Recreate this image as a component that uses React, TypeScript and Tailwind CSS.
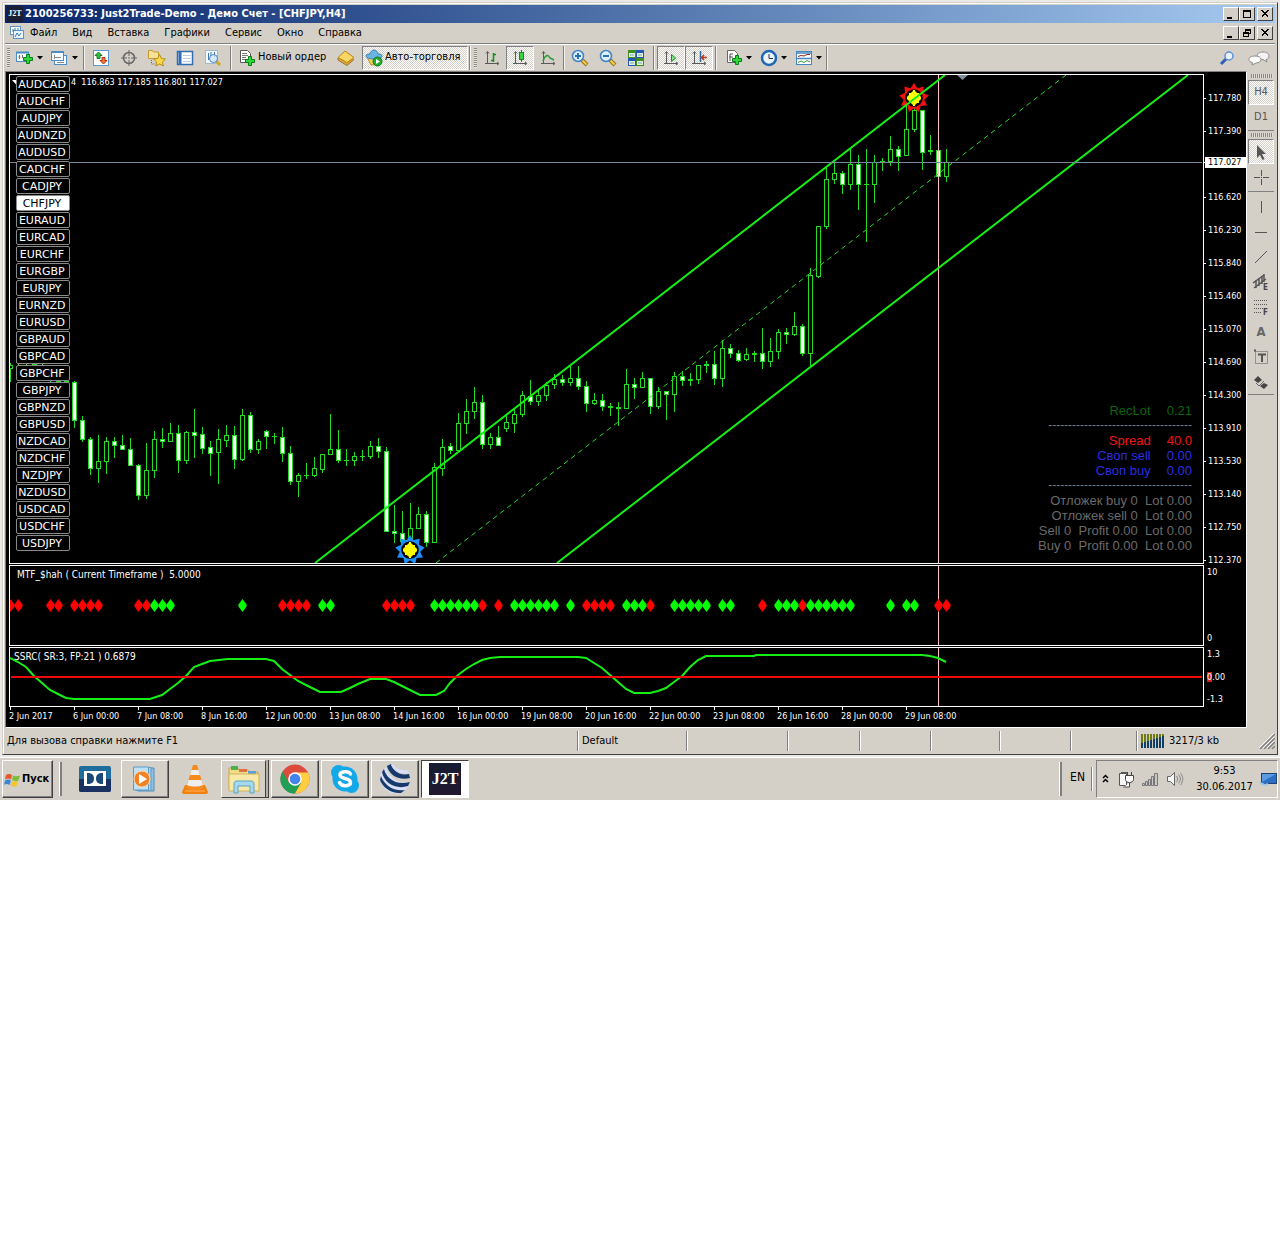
import React from "react";

type Candle = [high: number, top: number, bottom: number, low: number, kind: "u" | "d" | "x"];

const STEP = 8;
const FIRST_X = 10;

// u = hollow body, d = filled body, x = doji
const candles: Candle[] = [
  [363, 365, 369, 382, "u"], [364, 366, 372, 376, "d"], [364, 368, 372, 378, "d"], [362, 364, 372, 376, "d"],
  [364, 368, 374, 378, "u"], [376, 382, 390, 392, "d"], [376, 381, 388, 392, "d"], [378, 381, 386, 390, "d"],
  [381, 382, 421, 428, "d"], [416, 420, 440, 442, "d"], [437, 439, 469, 475, "d"], [435, 461, 469, 483, "u"],
  [437, 441, 462, 474, "u"], [437, 441, 446, 458, "d"], [435, 445, 450, 450, "d"], [438, 449, 466, 466, "d"],
  [464, 465, 496, 500, "d"], [443, 470, 496, 499, "u"], [431, 439, 471, 478, "u"], [428, 439, 442, 448, "d"],
  [423, 433, 442, 442, "u"], [425, 433, 461, 473, "d"], [431, 432, 461, 464, "u"], [409, 432, 436, 458, "d"],
  [427, 434, 449, 454, "d"], [441, 447, 454, 476, "d"], [429, 439, 453, 484, "u"], [425, 435, 441, 447, "u"],
  [426, 435, 460, 469, "d"], [409, 415, 460, 461, "u"], [412, 415, 450, 453, "d"], [439, 441, 450, 454, "u"],
  [430, 431, 437, 449, "d"], [433, 436, 437, 444, "x"], [427, 437, 454, 462, "d"], [446, 453, 482, 485, "d"],
  [473, 475, 482, 497, "u"], [463, 475, 476, 479, "x"], [457, 468, 476, 477, "u"], [454, 454, 470, 473, "u"],
  [414, 449, 455, 455, "u"], [430, 449, 461, 463, "d"], [449, 460, 461, 466, "x"], [452, 456, 461, 466, "u"],
  [450, 456, 457, 461, "x"], [441, 446, 457, 459, "u"], [438, 446, 452, 458, "d"], [447, 451, 532, 532, "d"],
  [505, 531, 534, 543, "d"], [511, 533, 542, 550, "d"], [503, 528, 545, 548, "u"], [507, 514, 529, 529, "u"],
  [511, 514, 543, 547, "d"], [463, 467, 543, 543, "u"], [439, 447, 469, 476, "u"], [443, 446, 451, 454, "d"],
  [413, 423, 451, 451, "u"], [399, 411, 424, 434, "u"], [387, 402, 412, 419, "u"], [395, 402, 445, 449, "d"],
  [433, 437, 445, 449, "u"], [426, 437, 446, 446, "d"], [415, 422, 429, 432, "u"], [408, 414, 424, 433, "u"],
  [391, 395, 415, 417, "u"], [380, 396, 402, 405, "d"], [391, 395, 402, 406, "u"], [382, 385, 396, 401, "u"],
  [374, 379, 385, 389, "u"], [375, 379, 383, 386, "d"], [365, 378, 383, 386, "u"], [366, 378, 387, 390, "d"],
  [381, 386, 404, 412, "d"], [393, 400, 404, 405, "u"], [394, 400, 407, 411, "d"], [403, 406, 408, 416, "x"],
  [402, 407, 409, 426, "x"], [369, 384, 409, 409, "u"], [378, 384, 388, 399, "d"], [372, 378, 388, 388, "u"],
  [378, 378, 407, 414, "d"], [387, 391, 407, 409, "u"], [391, 391, 395, 420, "d"], [372, 376, 395, 412, "u"],
  [371, 376, 381, 386, "d"], [373, 379, 381, 386, "x"], [365, 365, 380, 384, "u"], [361, 364, 366, 373, "x"],
  [351, 364, 379, 385, "d"], [340, 348, 379, 387, "u"], [344, 348, 354, 358, "d"], [350, 353, 361, 362, "d"],
  [348, 354, 360, 361, "u"], [351, 353, 355, 362, "x"], [328, 353, 362, 369, "d"], [338, 351, 362, 367, "u"],
  [329, 332, 352, 359, "u"], [328, 332, 335, 344, "d"], [312, 326, 335, 336, "u"], [324, 326, 354, 356, "d"],
  [268, 275, 354, 367, "u"], [226, 226, 277, 278, "u"], [167, 179, 227, 229, "u"], [162, 173, 180, 184, "u"],
  [171, 173, 185, 194, "d"], [149, 164, 185, 190, "u"], [155, 164, 185, 210, "d"], [149, 184, 185, 242, "x"],
  [155, 162, 185, 203, "u"], [158, 161, 163, 171, "x"], [136, 149, 162, 166, "u"], [146, 149, 157, 171, "d"],
  [106, 129, 156, 156, "u"], [106, 110, 130, 132, "u"], [110, 110, 153, 170, "d"], [135, 150, 152, 155, "x"],
  [142, 150, 177, 182, "d"], [149, 162, 177, 182, "u"],
];

const redMarks = [
  10, 18, 50, 58, 74, 82, 90, 98, 138, 146, 282, 290, 298, 306, 386, 394, 402, 410, 482, 498, 586, 594, 602, 610, 650,
  762, 802, 938, 946,
];
const greenMarks = [
  154, 162, 170, 242, 322, 330, 434, 442, 450, 458, 466, 474, 514, 522, 530, 538, 546, 554, 570, 626, 634, 642, 674,
  682, 690, 698, 706, 722, 730, 778, 786, 794, 810, 818, 826, 834, 842, 850, 890, 906, 914,
];

const pairs = [
  "AUDCAD", "AUDCHF", "AUDJPY", "AUDNZD", "AUDUSD", "CADCHF", "CADJPY", "CHFJPY", "EURAUD", "EURCAD", "EURCHF",
  "EURGBP", "EURJPY", "EURNZD", "EURUSD", "GBPAUD", "GBPCAD", "GBPCHF", "GBPJPY", "GBPNZD", "GBPUSD", "NZDCAD",
  "NZDCHF", "NZDJPY", "NZDUSD", "USDCAD", "USDCHF", "USDJPY",
];

const prices = [
  "117.780", "117.390", "117.027", "116.620", "116.230", "115.840", "115.460", "115.070", "114.690", "114.300",
  "113.910", "113.530", "113.140", "112.750", "112.370",
];

const times = [
  "2 Jun 2017", "6 Jun 00:00", "7 Jun 08:00", "8 Jun 16:00", "12 Jun 00:00", "13 Jun 08:00", "14 Jun 16:00",
  "16 Jun 00:00", "19 Jun 08:00", "20 Jun 16:00", "22 Jun 00:00", "23 Jun 08:00", "26 Jun 16:00", "28 Jun 00:00",
  "29 Jun 08:00",
];

const menu = ["Файл", "Вид", "Вставка", "Графики", "Сервис", "Окно", "Справка"];

const ui = "font-['DejaVu_Sans_Condensed','DejaVu_Sans',sans-serif]";
const raised = "border border-t-white border-l-white border-r-[#404040] border-b-[#404040] bg-[#d4d0c8]";
const pressed =
  "border border-t-[#808080] border-l-[#808080] border-r-white border-b-white bg-[repeating-conic-gradient(#fff_0_25%,#d4d0c8_0_50%)] bg-[length:2px_2px]";

/* ---------- small building blocks ---------- */

const Svg = ({ w = 18, h = 18, children }: { w?: number; h?: number; children: React.ReactNode }) => (
  <svg width={w} height={h} viewBox={`0 0 ${w} ${h}`} fill="none" className="shrink-0" aria-hidden="true">
    {children}
  </svg>
);

const Tool = ({ label, on, children }: { label: string; on?: boolean; children: React.ReactNode }) => (
  <button aria-label={label} className={`flex h-6 w-7 shrink-0 items-center justify-center ${on ? pressed : ""}`}>
    {children}
  </button>
);

const DropTool = ({ label, children }: { label: string; children: React.ReactNode }) => (
  <button aria-label={label} className="flex h-6 w-[35px] shrink-0 items-center gap-0.5 pl-0.5">
    {children}
    <Svg w={7} h={4}>
      <path d="M1 0h6L4 3.5z" fill="#000" />
    </Svg>
  </button>
);

const Sep = ({ className = "" }: { className?: string }) => (
  <div className={`h-6 w-0.5 shrink-0 border-l border-[#808080] bg-[#f4f2ee] ${className}`}></div>
);

const Grip = ({ className = "" }: { className?: string }) => (
  <div className={`h-5 w-[3px] shrink-0 bg-[repeating-linear-gradient(#8a8780_0_1px,#e8e6e0_1px_2px)] ${className}`}></div>
);

const SideGrip = () => (
  <div className="my-0.5 ml-[3px] h-1 w-[22px] bg-[repeating-linear-gradient(90deg,#8a8780_0_1px,#e0ddd6_1px_2px)]"></div>
);

const SideTool = ({ label, on, children }: { label: string; on?: boolean; children: React.ReactNode }) => (
  <button
    aria-label={label}
    className={`flex h-[25px] w-full shrink-0 items-center justify-center text-[11px] text-[#555] ${on ? pressed : ""}`}
  >
    {children}
  </button>
);

const Axes = ({ children }: { children: React.ReactNode }) => (
  <Svg>
    <path d="M4.500 3v12M2 14.500h13M3 4.500l1.500-2 1.500 2M14 13l2 1.500-2 1.500" stroke="#5a5a5a" />
    {children}
  </Svg>
);

const Plus = ({ x, y }: { x: number; y: number }) => (
  <path
    transform={`translate(${x} ${y})`}
    d="M3.500.5h3v3h3v3h-3v3h-3v-3h-3v-3h3z"
    fill="#2fd83a"
    stroke="#0b7d16"
  />
);

const Lens = ({ sign }: { sign: string }) => (
  <Svg>
    <path d="M11 11l5 5" stroke="#9a7410" strokeWidth="4" />
    <path d="M11.500 11.500l4 4" stroke="#f3cf4a" strokeWidth="2" />
    <circle cx="7" cy="7" r="5.500" fill="#dff0fd" stroke="#3d83c4" strokeWidth="1.500" />
    <path d={sign} stroke="#2a6fb5" strokeWidth="2" />
  </Svg>
);

const Sun = ({ x, y, color }: { x: number; y: number; color: string }) => (
  <g transform={`translate(${x} ${y})`}>
    {[0, 40, 80, 120, 160, 200, 240, 280, 320].map((a) => (
      <path key={a} d="M-4-9L0-15l4 6z" fill={color} transform={`rotate(${a})`} />
    ))}
    <circle r="9.500" fill="#000" stroke={color} strokeWidth="1.500" />
    {[0, 30, 60].map((a) => (
      <rect key={a} x="-5" y="-5" width="10" height="10" fill="#ff0" transform={`rotate(${a})`} />
    ))}
    <path d="M0-8v16M-7 0H7" stroke="#ff0" strokeWidth="2" />
  </g>
);

const WinButton = ({ label, d, className = "" }: { label: string; d: string; className?: string }) => (
  <button aria-label={label} className={`flex h-3.5 w-4 items-center justify-center ${raised} ${className}`}>
    <svg width="10" height="10" viewBox="0 0 10 10" fill="none" stroke="#000" shapeRendering="crispEdges" aria-hidden="true">
      <path d={d} />
    </svg>
  </button>
);

const MIN = "M1 8h5M1 9h5";
const MAX = "M1 1.500h8M1 2.500h8M1.500 1v8M8.500 1v8M1 8.500h8";
const RESTORE = "M3 1.500h6M3 2.500h6M3.500 1v3M8.500 1v5M7 5.500h2M1 4.500h6M1 5.500h6M1.500 4v5M6.500 4v5M1 8.500h6";
const CLOSE = "M1.500 1.500l7 7M2.500 1.500l6 6M8.500 1.500l-7 7M7.500 1.500l-6 6";

/* ---------- window bars ---------- */

const TitleBar = () => (
  <div className="flex h-[18px] items-center bg-linear-to-r from-[#0a246a] to-[#a6caf0] pr-0.5 pl-0.5">
    <div className="flex h-4 w-4 items-center justify-center bg-[#1b1f33] font-['Liberation_Serif',serif] text-[8px] font-bold text-white">
      J2T
    </div>
    <h1 className="ml-0.5 flex-1 text-[11px] leading-4 font-bold whitespace-nowrap text-white">
      2100256733: Just2Trade-Demo - Демо Счет - [CHFJPY,H4]
    </h1>
    <WinButton label="Свернуть" d={MIN} />
    <WinButton label="Развернуть" d={MAX} />
    <WinButton label="Закрыть" d={CLOSE} className="ml-0.5" />
  </div>
);

const MenuBar = () => (
  <div className="flex h-5 items-center pr-0.5 pl-1 text-[11px] text-black">
    <Svg w={16} h={16}>
      <rect x="1.500" y="1.500" width="10" height="8" fill="#fff" stroke="#5d95c6" />
      <rect x="4.500" y="5.500" width="10" height="8" fill="#eaf4fc" stroke="#5d95c6" />
      <path d="M4 7V4m2 2V3m3 2V3M6 12l2-4 2 3 2-3" stroke="#3c7ab2" />
    </Svg>
    <nav className="flex flex-1 gap-[15px] pl-[5px]">
      {menu.map((m) => (
        <button key={m}>{m}</button>
      ))}
    </nav>
    <WinButton label="Свернуть окно" d={MIN} />
    <WinButton label="Восстановить окно" d={RESTORE} />
    <WinButton label="Закрыть окно" d={CLOSE} className="ml-0.5" />
  </div>
);

const Toolbar = () => (
  <div className="flex h-7 items-center border-t border-[#808080] text-[11px] text-black shadow-[inset_0_1px_0_#fff]">
    <Grip className="mr-0.5 ml-0.5" />
    <DropTool label="Новый график">
      <Svg w={20}>
        <rect x="2.500" y="3.500" width="12" height="9" fill="#f6fbff" stroke="#4d8cc4" />
        <path d="M2 3.500h13" stroke="#4d8cc4" strokeWidth="2" />
        <path d="M5.500 6v4m-1-2h2M8.500 6v3" stroke="#777" />
        <Plus x={9} y={5} />
      </Svg>
    </DropTool>
    <DropTool label="Профили">
      <Svg w={20}>
        <rect x="5.500" y="6.500" width="12" height="9" fill="#f6fbff" stroke="#4d8cc4" />
        <rect x="2.500" y="2.500" width="12" height="9" fill="#f6fbff" stroke="#4d8cc4" />
        <path d="M2 3h13" stroke="#4d8cc4" strokeWidth="2" />
        <path d="M5.500 6v4M5 8.500h7M8 13.500h7" stroke="#888" />
      </Svg>
    </DropTool>
    <Sep className="mr-0.5 ml-px" />
    <Tool label="Обзор рынка">
      <Svg>
        <rect x="1.500" y="1.500" width="15" height="15" fill="#fff" stroke="#5b9bd5" />
        <path d="M6.500 3l3.500 3.500H8v3H5v-3H3z" fill="#2fc23a" stroke="#187a20" />
        <path d="M11.500 15L8 11.500h2v-3h3v3h2z" fill="#f2703a" stroke="#b23a10" />
      </Svg>
    </Tool>
    <Tool label="Окно данных">
      <Svg>
        <circle cx="9" cy="9" r="5.500" stroke="#666" strokeWidth="1.500" />
        <path d="M9 1v6M9 11v6M1 9h6M11 9h6" stroke="#666" />
        <path d="M8 9h2" stroke="#666" />
      </Svg>
    </Tool>
    <Tool label="Навигатор">
      <Svg w={20}>
        <path d="M1.500 9.500v-8h4l1 1.500h5v6.500z" fill="#f8e29a" stroke="#c79a2b" />
        <path d="M4.500 11v4H8" stroke="#666" strokeDasharray="1 1" />
        <path d="M12.500 5.500l1.900 4 4.100.5-3 2.900.8 4.100-3.800-2-3.700 2 .7-4.100-3-2.900 4.200-.5z" fill="#fbd94b" stroke="#b98a12" />
      </Svg>
    </Tool>
    <Tool label="Терминал">
      <Svg>
        <rect x="1.500" y="2.500" width="15" height="13" fill="#fff" stroke="#2f6db0" strokeWidth="1.500" />
        <path d="M4 3v12" stroke="#2f6db0" strokeWidth="3" />
        <path d="M7 6.500h8M7 9.500h8M7 12.500h8" stroke="#b6cfe6" />
      </Svg>
    </Tool>
    <Tool label="Тестер стратегий">
      <Svg>
        <rect x="1.500" y="1.500" width="12" height="13" fill="#f4f9fe" stroke="#9dbbd6" />
        <path d="M4.500 4v7M7 3v4M10.500 3v5" stroke="#3d7ab0" />
        <path d="M12 12l4 4" stroke="#d6a62c" strokeWidth="3" />
        <circle cx="9.500" cy="9.500" r="4" fill="#cfe6fa" fillOpacity=".8" stroke="#4a86bd" />
      </Svg>
    </Tool>
    <Sep className="mr-1.5 ml-[3px]" />
    <button className="flex h-6 w-[94px] shrink-0 items-center gap-0.5 whitespace-nowrap">
      <Svg>
        <path d="M2.500 1.500h7l3 3v9h-10z" fill="#fff" stroke="#555" />
        <path d="M4 4.500h5M4 6.500h6M4 8.500h4M4 10.500h4" stroke="#777" />
        <Plus x={7} y={7} />
      </Svg>
      <span>Новый ордер</span>
    </button>
    <Tool label="Редактор">
      <Svg>
        <path d="M1 10l7-7 9 7-7 6z" fill="#d9a32a" />
        <path d="M1 8.500L8 2l9 6.500-7 5z" fill="#f9d765" stroke="#b9831a" />
        <path d="M1 9v2l9 5.500 7-6" stroke="#a06c10" />
      </Svg>
    </Tool>
    <button className={`ml-0.5 flex h-6 w-[106px] shrink-0 items-center gap-0.5 px-0.5 whitespace-nowrap ${pressed}`}>
      <Svg>
        <path d="M2 8l4 8 9-1 1-7z" fill="#f4d25e" stroke="#b98f20" />
        <path d="M1 7c0-2 3-2 4-2 0-2 2-4 4-4s4 2 4 4c2 0 4 0 4 2s-4 3-8 3-8-1-8-3z" fill="#69b4e0" stroke="#3a83b5" />
        <circle cx="12.500" cy="12.500" r="4.500" fill="#22ad2d" stroke="#0e7c1a" />
        <path d="M11 10l4 2.500-4 2.500z" fill="#fff" />
      </Svg>
      <span>Авто-торговля</span>
    </button>
    <Sep className="ml-px" />
    <Grip className="mr-px ml-[3px]" />
    <Tool label="Бары">
      <Axes>
        <path d="M10.500 4v9M11 5.500h2M8 11.500h2" stroke="#178a22" strokeWidth="1.500" />
      </Axes>
    </Tool>
    <Tool label="Свечи" on>
      <Axes>
        <path d="M10.500 1v12" stroke="#178a22" />
        <rect x="8.500" y="3.500" width="4" height="7" fill="#35d642" stroke="#178a22" />
      </Axes>
    </Tool>
    <Tool label="Линия">
      <Axes>
        <path d="M4 12c2-6 5-7 7-3l4 2" stroke="#2c9a36" strokeWidth="1.500" />
      </Axes>
    </Tool>
    <Sep className="mr-px ml-px" />
    <Tool label="Увеличить">
      <Lens sign="M4 7h6M7 4v6" />
    </Tool>
    <Tool label="Уменьшить">
      <Lens sign="M4 7h6" />
    </Tool>
    <Tool label="Расположить окна">
      <Svg>
        <rect x="1" y="1" width="8" height="8" fill="#3f8f22" />
        <rect x="9" y="1" width="8" height="8" fill="#2357b4" />
        <rect x="1" y="9" width="8" height="8" fill="#2357b4" />
        <rect x="9" y="9" width="8" height="8" fill="#3f8f22" />
        <path d="M2 4h6v4H2zM10 4h6v4h-6zM2 12h6v4H2zM10 12h6v4h-6z" fill="#e4f2dc" />
        <path d="M3 6h4M11 6h4M3 14h4M11 14h4" stroke="#6fa3c8" />
      </Svg>
    </Tool>
    <Sep className="mr-0.5 ml-[3px]" />
    <Tool label="Автопрокрутка" on>
      <Axes>
        <path d="M9.500 5.500l4 3.500-4 3.500z" fill="#7ee887" stroke="#178a22" />
      </Axes>
    </Tool>
    <Tool label="Сдвиг графика" on>
      <Axes>
        <path d="M10.500 2v11" stroke="#2a63a8" strokeWidth="1.500" />
        <path d="M17 8.500h-5M14 6l-2.500 2.500L14 11" stroke="#c0391b" strokeWidth="1.500" />
      </Axes>
    </Tool>
    <Sep className="mr-1.5 ml-0.5" />
    <DropTool label="Индикаторы">
      <Svg>
        <path d="M2.500 1.500h7l3 3v9h-10z" fill="#fff" stroke="#666" />
        <path d="M5 12V5h3M4 8h4" stroke="#555" />
        <Plus x={7} y={6} />
      </Svg>
    </DropTool>
    <DropTool label="Периоды">
      <Svg>
        <circle cx="9" cy="9" r="7" fill="#e9f3fc" stroke="#1d66b8" strokeWidth="2.500" />
        <path d="M9 5v4.500h4" stroke="#333" />
      </Svg>
    </DropTool>
    <DropTool label="Шаблоны">
      <Svg>
        <rect x="1.500" y="2.500" width="15" height="13" fill="#fff" stroke="#4585c2" />
        <path d="M1 4h16M1 9.500h16" stroke="#4585c2" strokeWidth="1.500" />
        <path d="M3 7.500l3-1 3 .5 3-1.500h3" stroke="#8c2a1c" />
        <path d="M3 13.500l3-1.500 3 1.500 3-2 3 1.500" stroke="#2f9a38" />
      </Svg>
    </DropTool>
    <Sep className="mr-auto -ml-0.5" />
    <button aria-label="Поиск" className="mr-3">
      <Svg>
        <path d="M8 10l-5 5" stroke="#2d5fb8" strokeWidth="3" />
        <circle cx="11" cy="7" r="4" fill="#eaf3fc" stroke="#5f8fd4" strokeWidth="1.500" />
      </Svg>
    </button>
    <button aria-label="Чат" className="mr-[5px]">
      <Svg w={22}>
        <path d="M15 3c4 0 6 2 6 4s-1 3-3 3.500L19 13l-4-2.500C11 10.500 9 9 9 7s2-4 6-4z" fill="#f4f4f4" stroke="#8b8b8b" />
        <path d="M7 7c4 0 6 1.500 6 3.500S11 14 8 14l-4 2 .5-2.500C2 13 1 12 1 10.500 1 8.500 3 7 7 7z" fill="#fff" stroke="#8b8b8b" />
      </Svg>
    </button>
  </div>
);

/* ---------- chart ---------- */

const PriceChart = () => (
  <svg viewBox="10 75 1192 488" className="block h-[488px] w-[1192px] max-w-none" aria-label="CHFJPY H4">
    <g shapeRendering="crispEdges">
      {candles.map(([high, top, bottom, low, kind], i) => {
        const x = FIRST_X + i * STEP;
        return (
          <g key={i} fill="#24dc24">
            <rect x={x} y={high} width={1} height={low - high} />
            <rect x={x - 2} y={top} width={5} height={bottom - top} />
            {kind !== "x" && (
              <rect
                x={x - 1}
                y={top + 1}
                width={3}
                height={Math.max(bottom - top - 2, 1)}
                fill={kind === "d" ? "#fff" : "#000"}
              />
            )}
          </g>
        );
      })}
      <path d="M938.500 75V563" stroke="#ffc0cb" />
    </g>
    <Sun x={914} y={98} color="#f01010" />
    <Sun x={410} y={550} color="#1e90ff" />
    <path d="M315 563L945 75M557 563L1188 75" stroke="#14f014" strokeWidth="2" />
    <path d="M436 563L1066 75" stroke="#28d828" strokeDasharray="5 4" />
    <path d="M10 162.500H1202" stroke="#778899" shapeRendering="crispEdges" />
    <path d="M957 75h11l-5.500 5z" fill="#8090a0" />
    <path d="M12 80h9l-4.500 5z" fill="#fff" />
  </svg>
);

const PairList = () => (
  <div className="absolute top-px left-1.5 flex w-[54px] flex-col gap-px font-['DejaVu_Sans',sans-serif] text-[11px]">
    {pairs.map((p) => (
      <button
        key={p}
        className={`flex h-4 items-center justify-center rounded-xs border border-[#8a8a8a] pr-0.5 leading-none ${
          p === "CHFJPY" ? "bg-white text-black" : "bg-black text-white"
        }`}
      >
        {p}
      </button>
    ))}
  </div>
);

const Pair = ({ name, value, color }: { name: string; value: string; color: string }) => (
  <div className={`flex justify-end gap-4 ${color}`}>
    <span>{name}</span>
    <span>{value}</span>
  </div>
);

const Dashes = () => <div className="text-[12px] text-[#777]">{"-".repeat(36)}</div>;

const InfoPanel = () => (
  <div className="absolute right-[11px] bottom-2.5 text-right font-['Liberation_Sans',Arial,sans-serif] text-[13px] leading-[15px] whitespace-pre text-[#6a6a6a]">
    <Pair name="RecLot" value="0.21" color="text-[#0f640f]" />
    <Dashes />
    <Pair name="Spread" value="40.0" color="text-[#f01414]" />
    <Pair name="Своп sell" value="0.00" color="text-[#2c2ce0]" />
    <Pair name="Своп buy" value="0.00" color="text-[#2c2ce0]" />
    <Dashes />
    <p>{"Отложек buy 0  Lot 0.00"}</p>
    <p>{"Отложек sell 0  Lot 0.00"}</p>
    <p>{"Sell 0  Profit 0.00  Lot 0.00"}</p>
    <p>{"Buy 0  Profit 0.00  Lot 0.00"}</p>
  </div>
);

const ChartArea = () => (
  <div className="min-w-0 flex-1 border-t border-r border-b border-l border-t-[#808080] border-r-white border-b-white border-l-[#808080] bg-black pt-0.5 pl-[3px] text-[9px] text-white">
    {/* price */}
    <div className="flex h-[490px]">
      <div className="relative min-w-0 flex-1 overflow-hidden border border-white">
        <PriceChart />
        <p className="absolute top-0 left-[61px] leading-[15px] whitespace-pre">{"4  116.863 117.185 116.801 117.027"}</p>
        <PairList />
        <InfoPanel />
      </div>
      <div className="w-[42px] shrink-0 pt-2">
        {prices.map((p) => (
          <div key={p} className={`flex h-[33px] items-center ${p === "117.027" ? "pb-1" : ""}`}>
            <span className="h-px w-0.5 bg-white"></span>
            {p === "117.027" ? (
              <span className="-ml-px flex-1 bg-white pl-[3px] leading-[11px] text-black">{p}</span>
            ) : (
              <span className="ml-0.5">{p}</span>
            )}
          </div>
        ))}
      </div>
    </div>

    {/* MTF signal row */}
    <div className="mt-px flex">
      <div className="relative min-w-0 flex-1 overflow-hidden border border-white">
        <svg viewBox="10 566 1192 79" className="block h-[79px] w-[1192px] max-w-none" aria-hidden="true">
          <path d="M938.500 566V645" stroke="#ffc0cb" shapeRendering="crispEdges" />
          {redMarks.map((x) => (
            <path key={x} d={`M${x + 0.5} 599l4 5.500v2l-4 5.500-4-5.500v-2z`} fill="#f00" />
          ))}
          {greenMarks.map((x) => (
            <path key={x} d={`M${x + 0.5} 599l4 5.500v2l-4 5.500-4-5.500v-2z`} fill="#0f0" />
          ))}
        </svg>
        <p className="absolute top-px left-[7px] text-[10px] leading-[15px] whitespace-pre">
          {"MTF_$hah ( Current Timeframe )  5.0000"}
        </p>
      </div>
      <div className="flex w-[42px] shrink-0 flex-col justify-between py-0.5 pl-[3px] leading-[11px]">
        <span>10</span>
        <span>0</span>
      </div>
    </div>

    {/* SSRC */}
    <div className="mt-px flex">
      <div className="relative min-w-0 flex-1 overflow-hidden border border-white">
        <svg viewBox="10 648 1192 58" className="block h-[58px] w-[1192px] max-w-none" fill="none" aria-hidden="true">
          <path d="M938.500 648V706" stroke="#ffc0cb" shapeRendering="crispEdges" />
          <path
            d="M10 658L18 662 26 667 34 676 42 683 50 690 58 694 66 698 74 699H150L162 695 170 689 178 683 186 676 194 667 202 664 210 661 228 659H266L274 661 282 669 290 675 298 681 306 685 314 689 320 692H341L350 688 358 684 370 679H386L394 682 402 686 410 690 420 695H436L444 691 450 683 458 675 466 669 474 664 482 660 490 658 500 657H578L586 658 594 663 602 668 610 675 618 682 626 689 634 693H650L658 691 666 688 674 682 682 676 690 667 698 660 706 656H754L756 655H922L930 656 938 658 946 662"
            stroke="#14f014"
            strokeWidth="2"
          />
          <path d="M11 677H1202" stroke="#f00808" strokeWidth="2" />
        </svg>
        <p className="absolute top-px left-1 text-[10px] leading-[15px]">SSRC( SR:3, FP:21 ) 0.6879</p>
      </div>
      <div className="flex w-[42px] shrink-0 flex-col justify-between py-0.5 pl-[3px] leading-[11px]">
        <span>1.3</span>
        <span>
          <span className="bg-[#e01818]">0</span>.00
        </span>
        <span>-1.3</span>
      </div>
    </div>

    {/* time scale */}
    <div className="flex h-5 overflow-hidden">
      {times.map((t) => (
        <div key={t} className="w-16 shrink-0 whitespace-nowrap">
          <div className="ml-px h-[3px] w-px bg-white"></div>
          <div className="leading-[13px]">{t}</div>
        </div>
      ))}
    </div>
  </div>
);

const SideBar = () => (
  <div className="flex w-7 shrink-0 flex-col px-px pt-px">
    <SideGrip />
    <div className="flex flex-col border-b border-[#808080]">
      <SideTool label="H4" on>H4</SideTool>
      <SideTool label="D1">D1</SideTool>
    </div>
    <SideGrip />
    <div className="flex flex-col">
      <SideTool label="Курсор" on>
        <Svg>
          <path d="M5 2v13l3-3 2.500 5 2-1L10 11h4z" fill="#555" />
        </Svg>
      </SideTool>
      <SideTool label="Перекрестие">
        <Svg>
          <path d="M9.500 2v6M9.500 11v6M2 9.500h6M11 9.500h6M9 9.500h1" stroke="#555" />
        </Svg>
      </SideTool>
      <div className="mt-0.5 mb-0.5 h-px bg-[#808080]"></div>
      <SideTool label="Вертикальная линия">
        <Svg>
          <path d="M9.500 3v12" stroke="#555" />
        </Svg>
      </SideTool>
      <SideTool label="Горизонтальная линия">
        <Svg>
          <path d="M3 9.500h12" stroke="#555" />
        </Svg>
      </SideTool>
      <SideTool label="Трендовая линия">
        <Svg>
          <path d="M3 15L15 3" stroke="#555" />
        </Svg>
      </SideTool>
      <SideTool label="Канал">
        <Svg w={20} h={22}>
          <path d="M2 12L13 4M3 17L15 8M5 9v8M8 7v8M11 5v8M13 3v8" stroke="#555" strokeWidth="1.500" />
          <text x="12" y="19" fontSize="8" fontWeight="bold" fill="#444">E</text>
        </Svg>
      </SideTool>
      <SideTool label="Фибоначчи">
        <Svg w={20} h={22}>
          <path d="M3 4.500h13M3 8.500h13M3 12.500h13M3 16.500h8" stroke="#555" strokeDasharray="1 1" />
          <text x="12" y="19" fontSize="8" fontWeight="bold" fill="#444">F</text>
        </Svg>
      </SideTool>
      <SideTool label="Текст">
        <span className="text-[13px] font-bold text-[#666]">A</span>
      </SideTool>
      <SideTool label="Метка">
        <Svg>
          <rect x="3.500" y="3.500" width="12" height="12" stroke="#555" strokeDasharray="1 1" />
          <path d="M6 6.500h8M10 6v8M2 2.500h2" stroke="#555" strokeWidth="2" />
        </Svg>
      </SideTool>
      <SideTool label="Стрелки">
        <Svg>
          <path d="M2 7l4-4 4 4-4 3zM8 13l4 3 4-4-4-2z" fill="#444" />
          <path d="M4 10l3 3 5-5" stroke="#666" />
        </Svg>
      </SideTool>
      <div className="h-px bg-[#808080]"></div>
    </div>
  </div>
);

const Cell = ({ className, children }: { className: string; children?: React.ReactNode }) => (
  <div className={`flex h-5 shrink-0 items-center border-l border-[#808080] shadow-[inset_1px_0_0_#fff] ${className}`}>
    {children}
  </div>
);

const StatusBar = () => (
  <footer className="flex h-[26px] items-center text-[11px] text-black">
    <span className="flex-1 pl-0.5">Для вызова справки нажмите F1</span>
    <Cell className="w-[109px] pl-1">Default</Cell>
    <Cell className="w-[101px]" />
    <Cell className="w-[72px]" />
    <Cell className="w-[71px]" />
    <Cell className="w-[69px]" />
    <Cell className="w-[71px]" />
    <Cell className="w-[66px]" />
    <Cell className="w-[139px] gap-1 pl-1">
      <Svg w={24} h={14}>
        {[0, 1, 2, 3, 4, 5, 6, 7].map((i) => (
          <g key={i}>
            <rect x={i * 3} y="0" width="2" height={9 - i} fill="#6b7a12" />
            <rect x={i * 3} y={9 - i} width="2" height={5 + i} fill="#123f66" />
          </g>
        ))}
      </Svg>
      <span className="flex-1">3217/3 kb</span>
      <Svg w={16} h={16}>
        <path d="M1 16L16 1M5 16L16 5M9 16l7-7M13 16l3-3" stroke="#808080" strokeWidth="1.500" />
        <path d="M0 15L15 0M4 15L15 4M8 15l7-7" stroke="#fff" />
      </Svg>
    </Cell>
  </footer>
);

/* ---------- taskbar ---------- */

const Task = ({ label, children }: { label: string; children: React.ReactNode }) => (
  <button
    aria-label={label}
    className={`flex h-[38px] w-12 shrink-0 items-center justify-center shadow-[inset_-1px_-1px_0_#808080] ${raised}`}
  >
    {children}
  </button>
);

const TaskBar = () => (
  <div className="flex h-[43px] items-center border-t border-white bg-[#d4d0c8] pr-0.5 pl-0.5 text-black">
    <button
      className={`flex h-[38px] w-[51px] shrink-0 items-center gap-px pl-px text-[11px] font-bold shadow-[inset_-1px_-1px_0_#808080] ${raised}`}
    >
      <Svg w={17} h={17}>
        <path d="M2 4c2-1.500 4-1.500 6 0L7 8.500c-2-1.500-4-1.500-6 0z" fill="#e8562a" />
        <path d="M9 4.500c2 1 4 1 7 0l-1.500 5c-2.500 1-4 1-6.500-.5z" fill="#7dbb3a" />
        <path d="M1 9.500c2-1.500 4-1.500 6 0L5.500 14c-2-1.200-4-1.200-5.500 0z" fill="#3a86d8" />
        <path d="M8 10c2 1 4 1 6 .3L12.500 15c-2 1-4 .8-6-.5z" fill="#f6c42c" />
      </Svg>
      Пуск
    </button>
    <div className="ml-1.5 h-[34px] w-[3px] shrink-0 border-l border-white bg-[#808080]"></div>
    <button aria-label="Dolby" className="ml-[17px] shrink-0">
      <Svg w={32} h={26}>
        <rect width="32" height="26" rx="2" fill="#1f6d9c" />
        <path d="M0 13h32v11a2 2 0 01-2 2H2a2 2 0 01-2-2z" fill="#1a3060" />
        <path d="M5 5h22v15H5z" fill="#fff" />
        <path d="M8 7h1c4.500 0 6 2.500 6 5.500S13.500 18 9 18H8z" fill="#1b4a78" />
        <path d="M24 7h-1c-4.500 0-6 2.500-6 5.500s1.500 5.500 6 5.500h1z" fill="#1b4a78" />
      </Svg>
    </button>
    <div className="ml-2.5 flex items-center gap-0.5">
      <Task label="Проигрыватель">
        <Svg w={32} h={28}>
          <path d="M9 3h16v23H9z" fill="#8fc1e2" stroke="#4f8dba" />
          <path d="M7 2.500h15v23H7z" fill="#a9d2ee" stroke="#5e9bc6" />
          <path d="M4.500 2h15v23h-15z" fill="#bfe0f5" stroke="#5e9bc6" />
          <circle cx="13" cy="14" r="8" fill="#f08228" stroke="#fbd9ad" />
          <path d="M10 9l8 5-8 5z" fill="#fff" />
        </Svg>
      </Task>
      <button aria-label="VLC" className="flex w-12 shrink-0 justify-center">
        <Svg w={28} h={32}>
          <path d="M4 22h20l3 7c0 1-1 2-2 2H3c-1 0-2-1-2-2z" fill="#f08010" />
          <path d="M12 2h4l7 23c-3 3-15 3-18 0z" fill="#f58a1e" />
          <path d="M10.500 7h7l1.500 5H9zM7.500 17h13l1.500 5c-4 2-12 2-16 0z" fill="#eee" />
          <path d="M4 28h20" stroke="#ffb35c" />
        </Svg>
      </button>
      <div className="flex">
        <button aria-label="Проводник" className={`flex h-[38px] w-[45px] items-center justify-center ${raised}`}>
          <Svg w={34} h={30}>
            <path d="M2 4h9l1 2h9l1 2h9v18H2z" fill="#f2dc88" stroke="#c7a64a" />
            <path d="M4 2h7v4H4z" fill="#4caf50" />
            <path d="M12 5h8v3h-8z" fill="#e07040" />
            <path d="M21 7h8v3h-8z" fill="#58a0d8" />
            <path d="M2 10h30v17H2z" fill="#f8e9a6" stroke="#d2b25c" />
            <path d="M7 29V20c0-2 1-3 3-3h14c2 0 3 1 3 3v9h-4v-7H11v7z" fill="#a6d8ee" stroke="#5ba3c6" />
          </Svg>
        </button>
        <div className="h-[38px] w-[3px] border-r border-b border-[#404040] bg-[#b4b0a8]"></div>
      </div>
      <Task label="Chrome">
        <Svg w={30} h={30}>
          <circle cx="15" cy="15" r="14.500" fill="#dd4b3e" />
          <path d="M2.500 7.500A14.500 14.500 0 0015 29.500l6.300-11L15 15 8.700 18.600z" fill="#1fa055" />
          <path d="M15 29.500A14.500 14.500 0 0028 8.500H15l6.300 10z" fill="#ffcd42" />
          <circle cx="15" cy="15" r="6.800" fill="#fff" />
          <circle cx="15" cy="15" r="5.300" fill="#4384ea" />
        </Svg>
      </Task>
      <Task label="Skype">
        <Svg w={30} h={30}>
          <circle cx="15" cy="15" r="12.500" fill="#13a8e8" />
          <circle cx="8.500" cy="8.500" r="7.500" fill="#13a8e8" />
          <circle cx="21.500" cy="21.500" r="7.500" fill="#13a8e8" />
          <path
            d="M20.500 10c-2-3.500-10.500-3-10.500 1 0 4.500 10.500 2.500 10.500 7.500 0 4-9 4.500-11 0"
            stroke="#fff"
            strokeWidth="3.500"
            strokeLinecap="round"
          />
        </Svg>
      </Task>
      <Task label="Just2Trade">
        <Svg w={32} h={32}>
          <path d="M7 4C2 8 0 14 2 20c3 7 10 12 19 10 5-2 9-6 10-11C22 22 10 16 7 4z" fill="#d9defa" />
          <path
            d="M12 1c2 7 9 12 18 10l1 4C20 18 10 12 8 3zM5 6c2 9 12 17 26 13l-2 4C17 27 5 20 3 9zM2 13c3 9 13 16 24 14l-4 3C13 31 4 25 1 17z"
            fill="#173a6b"
          />
          <path d="M14 1c3 5 8 7 14 6l2 3C22 12 15 8 12 2z" fill="#d9defa" />
        </Svg>
      </Task>
      <button
        aria-label="J2T"
        className="flex h-[38px] w-12 items-center justify-center border border-t-[#404040] border-l-[#404040] border-r-white border-b-white bg-white"
      >
        <span className="flex h-8 w-8 items-center justify-center bg-linear-to-b from-[#141c33] to-[#21182f] font-['Liberation_Serif',serif] text-[16px] font-bold text-white">
          J2T
        </span>
      </button>
    </div>

    <div className="ml-auto h-[34px] w-[3px] shrink-0 border-l border-white bg-[#808080]"></div>
    <span className="ml-2 pb-1 text-[12px]">EN</span>
    <div className="ml-1.5 h-6 w-0.5 border-l border-[#808080] bg-white"></div>
    <div className="ml-[3px] flex h-[38px] w-[182px] items-center border border-t-[#808080] border-l-[#808080] border-r-white border-b-white pl-[5px]">
      <button aria-label="Показать значки">
        <Svg w={8} h={10}>
          <path d="M1 4l2.500-2.500L6 4M1 8l2.500-2.500L6 8" stroke="#000" strokeWidth="1.500" />
        </Svg>
      </button>
      <div className="ml-2 flex items-center gap-2">
        <Svg w={16} h={18}>
          <path d="M3 2.500h7M1.500 3.500h7v12h-7z" fill="#f6f6f6" stroke="#555" />
          <path d="M7.500 5.500h8v4c0 2-2 3-4 3s-4-1-4-3zM9.500 5V2M13.500 5V2M11.500 13v4h-6" fill="#fff" stroke="#444" />
        </Svg>
        <Svg w={16} h={16}>
          <path d="M.5 12.500h2v2h-2zM3.500 10.500h2v4h-2zM6.500 8.500h2v6h-2zM9.500 5.500h2v9h-2zM12.500 2.500h3v12h-3z" fill="#c8c8c8" stroke="#777" />
        </Svg>
        <Svg w={18} h={16}>
          <path d="M1.500 5.500h3l4-4v13l-4-4h-3z" fill="#f6f6f6" stroke="#666" />
          <path d="M10.500 5c1.500 2 1.500 4 0 6M12.500 3.500c2.500 3 2.500 6 0 9M14.500 2c3 4 3 8 0 12" stroke="#888" />
        </Svg>
      </div>
      <div className="flex-1 pl-1.5 text-center text-[11px] leading-4">
        <div>9:53</div>
        <div>30.06.2017</div>
      </div>
      <Svg w={18} h={16}>
        <rect x="2.500" y="2.500" width="15" height="10" fill="#2b6fc4" stroke="#1b4178" />
        <path d="M3 3h14L3 11z" fill="#5a9ae0" />
        <path d="M1 12l5 2 3-1" stroke="#9cc6ea" strokeWidth="2" />
      </Svg>
    </div>
  </div>
);

export default function App() {
  return (
    <div className={`min-h-screen bg-white ${ui}`}>
      <div className="bg-[#ebe9e5] px-0.5 pt-0.5 pb-0.5">
        <main className="border-t border-r border-b border-l border-t-[#d4d0c8] border-r-[#404040] border-b-[#404040] border-l-[#d4d0c8] bg-[#d4d0c8] pr-[2px] shadow-[inset_1px_1px_0_#fff]">
          <div className="pt-0.5 pl-0.5">
            <TitleBar />
            <MenuBar />
            <Toolbar />
            <div className="flex">
              <ChartArea />
              <SideBar />
            </div>
            <StatusBar />
          </div>
        </main>
      </div>
      <TaskBar />
    </div>
  );
}
